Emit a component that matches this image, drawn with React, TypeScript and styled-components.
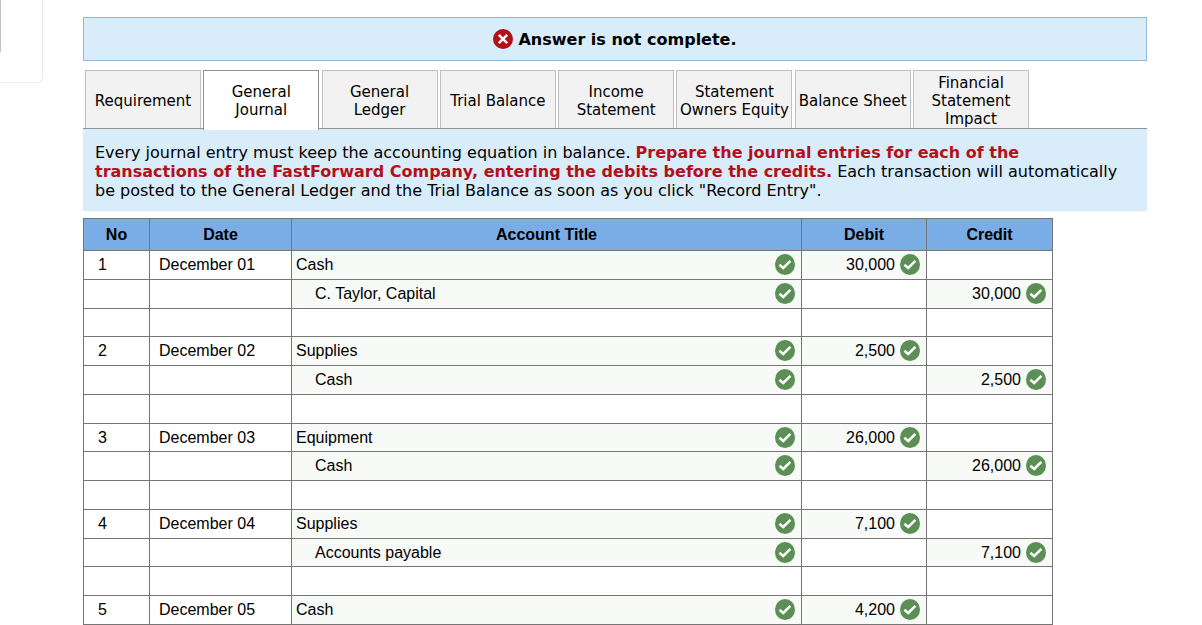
import React, { useState } from "react";
import styled, { createGlobalStyle } from "styled-components";

const GlobalStyle = createGlobalStyle`
  * { box-sizing: border-box; }
  body {
    margin: 0;
    background: #fff;
    color: #000;
    font-family: Verdana, "DejaVu Sans", sans-serif;
    font-size: 15px;
  }
`;

const Page = styled.div`
  display: flex;
  align-items: flex-start;
  gap: 40px;
  padding-right: 55px;
`;

const SidePanel = styled.aside`
  flex: none;
  width: 43px;
  height: 83px;
  border: solid #ececec;
  border-width: 0 1px 1px 0;
  border-bottom-right-radius: 6px;
`;

const SideRule = styled.div`
  height: 52px;
  border-left: 1px solid #c4c4c4;
`;

const Main = styled.main`
  flex: 1;
  min-width: 0;
  padding-top: 17px;
`;

const Banner = styled.div`
  display: flex;
  align-items: center;
  justify-content: center;
  gap: 5px;
  height: 44px;
  border: 1px solid #8fb6dc;
  background: #d9ecfa;
  font-size: 16px;
  font-weight: bold;
`;

const Tabs = styled.div`
  margin-top: 9px;
  border-bottom: 1px solid #929292;
`;

const TabRow = styled.div`
  display: flex;
  justify-content: space-between;
  max-width: 946px;
  padding-left: 2px;
`;

const Tab = styled.button<{ $active: boolean }>`
  flex: none;
  width: 116px;
  height: ${(p) => (p.$active ? 60 : 58)}px;
  margin-bottom: ${(p) => (p.$active ? -2 : 0)}px;
  padding: ${(p) => (p.$active ? "3px 0 3px" : "3px 0 0")};
  position: relative;
  border: 1px solid ${(p) => (p.$active ? "#929292" : "#c0c0c0")};
  border-bottom: 0;
  background: ${(p) => (p.$active ? "#fff" : "#f2f2f2")};
  color: #000;
  font: inherit;
  line-height: 18px;
  white-space: pre-line;
  cursor: pointer;
`;

const Instructions = styled.p`
  margin: 0;
  padding: 14px 12px 11px;
  background: #d9ecfa;
  font-size: 16px;
  line-height: 19px;
`;

const Emphasis = styled.strong`
  color: #b31118;
`;

const Journal = styled.table`
  width: 100%;
  max-width: 970px;
  margin-top: 7px;
  table-layout: fixed;
  border-collapse: collapse;
  font-family: Arial, "Liberation Sans", sans-serif;
  font-size: 16px;
  line-height: 18px;
`;

const Column = styled.col<{ $width?: number }>`
  width: ${(p) => (p.$width ? `${p.$width}px` : "auto")};
`;

const HeadCell = styled.th`
  height: 32px;
  padding: 0;
  border: 1px solid #767676;
  background: #7aace6;
`;

const Row = styled.tr`
  height: 29px;
  &:nth-child(4n + 3) { height: 28px; }
`;

const Cell = styled.td<{ $graded?: boolean; $pad?: number }>`
  padding: 0 6px 0 ${(p) => p.$pad ?? 4}px;
  border: 1px solid #767676;
  background: ${(p) => (p.$graded ? "#f7faf7" : "#fff")};
`;

const Graded = styled.div<{ $amount?: boolean; $indent?: boolean }>`
  display: flex;
  align-items: center;
  justify-content: ${(p) => (p.$amount ? "flex-end" : "space-between")};
  gap: 5px;
  padding-left: ${(p) => (p.$indent ? 19 : 0)}px;
`;

const Icon = styled.svg`
  display: block;
  flex: none;
`;

const CheckIcon = () => (
  <Icon width="20" height="22" viewBox="0 0 20 22" role="img" aria-label="Correct">
    <ellipse cx="10" cy="10.5" rx="10" ry="10.5" fill="#5b8f55" />
    <path d="M4.4 10.8 8.2 14 15.4 6.8" fill="none" stroke="#fff" strokeWidth="2.5" />
  </Icon>
);

const ErrorIcon = () => (
  <Icon width="20" height="20" viewBox="0 0 20 20" role="img" aria-label="Incorrect">
    <circle cx="10" cy="10" r="10" fill="#b31118" />
    <path d="M5.8 5.8 14.2 14.2M14.2 5.8 5.8 14.2" stroke="#fff" strokeWidth="2.4" />
  </Icon>
);

const tabs = [
  "Requirement",
  "General\nJournal",
  "General\nLedger",
  "Trial Balance",
  "Income\nStatement",
  "Statement\nOwners Equity",
  "Balance Sheet",
  "Financial\nStatement\nImpact",
];

type Entry = { no?: string; date?: string; account?: string; debit?: string; credit?: string };

const entries: Entry[] = [
  { no: "1", date: "December 01", account: "Cash", debit: "30,000" },
  { account: "C. Taylor, Capital", credit: "30,000" },
  {},
  { no: "2", date: "December 02", account: "Supplies", debit: "2,500" },
  { account: "Cash", credit: "2,500" },
  {},
  { no: "3", date: "December 03", account: "Equipment", debit: "26,000" },
  { account: "Cash", credit: "26,000" },
  {},
  { no: "4", date: "December 04", account: "Supplies", debit: "7,100" },
  { account: "Accounts payable", credit: "7,100" },
  {},
  { no: "5", date: "December 05", account: "Cash", debit: "4,200" },
];

const GradedCell = ({ value, amount, indent }: { value?: string; amount?: boolean; indent?: boolean }) => (
  <Cell $graded={!!value}>
    {value && (
      <Graded $amount={amount} $indent={indent}>
        {value}
        <CheckIcon />
      </Graded>
    )}
  </Cell>
);

export default function App() {
  const [active, setActive] = useState(1);
  return (
    <>
      <GlobalStyle />
      <Page>
        <SidePanel>
          <SideRule />
        </SidePanel>
        <Main>
          <Banner>
            <ErrorIcon />
            <span>Answer is not complete.</span>
          </Banner>
          <Tabs>
            <TabRow role="tablist">
              {tabs.map((label, i) => (
                <Tab
                  key={label}
                  type="button"
                  role="tab"
                  aria-selected={i === active}
                  $active={i === active}
                  onClick={() => setActive(i)}
                >
                  {label}
                </Tab>
              ))}
            </TabRow>
          </Tabs>
          <Instructions>
            Every journal entry must keep the accounting equation in balance.{" "}
            <Emphasis>
              Prepare the journal entries for each of the transactions of the FastForward Company,
              entering the debits before the credits.
            </Emphasis>{" "}
            Each transaction will automatically be posted to the General Ledger and the Trial
            Balance as soon as you click "Record Entry".
          </Instructions>
          <Journal>
            <colgroup>
              <Column $width={66} />
              <Column $width={142} />
              <Column />
              <Column $width={125} />
              <Column $width={126} />
            </colgroup>
            <thead>
              <tr>
                <HeadCell scope="col">No</HeadCell>
                <HeadCell scope="col">Date</HeadCell>
                <HeadCell scope="col">Account Title</HeadCell>
                <HeadCell scope="col">Debit</HeadCell>
                <HeadCell scope="col">Credit</HeadCell>
              </tr>
            </thead>
            <tbody>
              {entries.map((e, i) => (
                <Row key={i}>
                  <Cell $pad={14}>{e.no}</Cell>
                  <Cell $pad={9}>{e.date}</Cell>
                  <GradedCell value={e.account} indent={!!e.credit} />
                  <GradedCell value={e.debit} amount />
                  <GradedCell value={e.credit} amount />
                </Row>
              ))}
            </tbody>
          </Journal>
        </Main>
      </Page>
    </>
  );
}
